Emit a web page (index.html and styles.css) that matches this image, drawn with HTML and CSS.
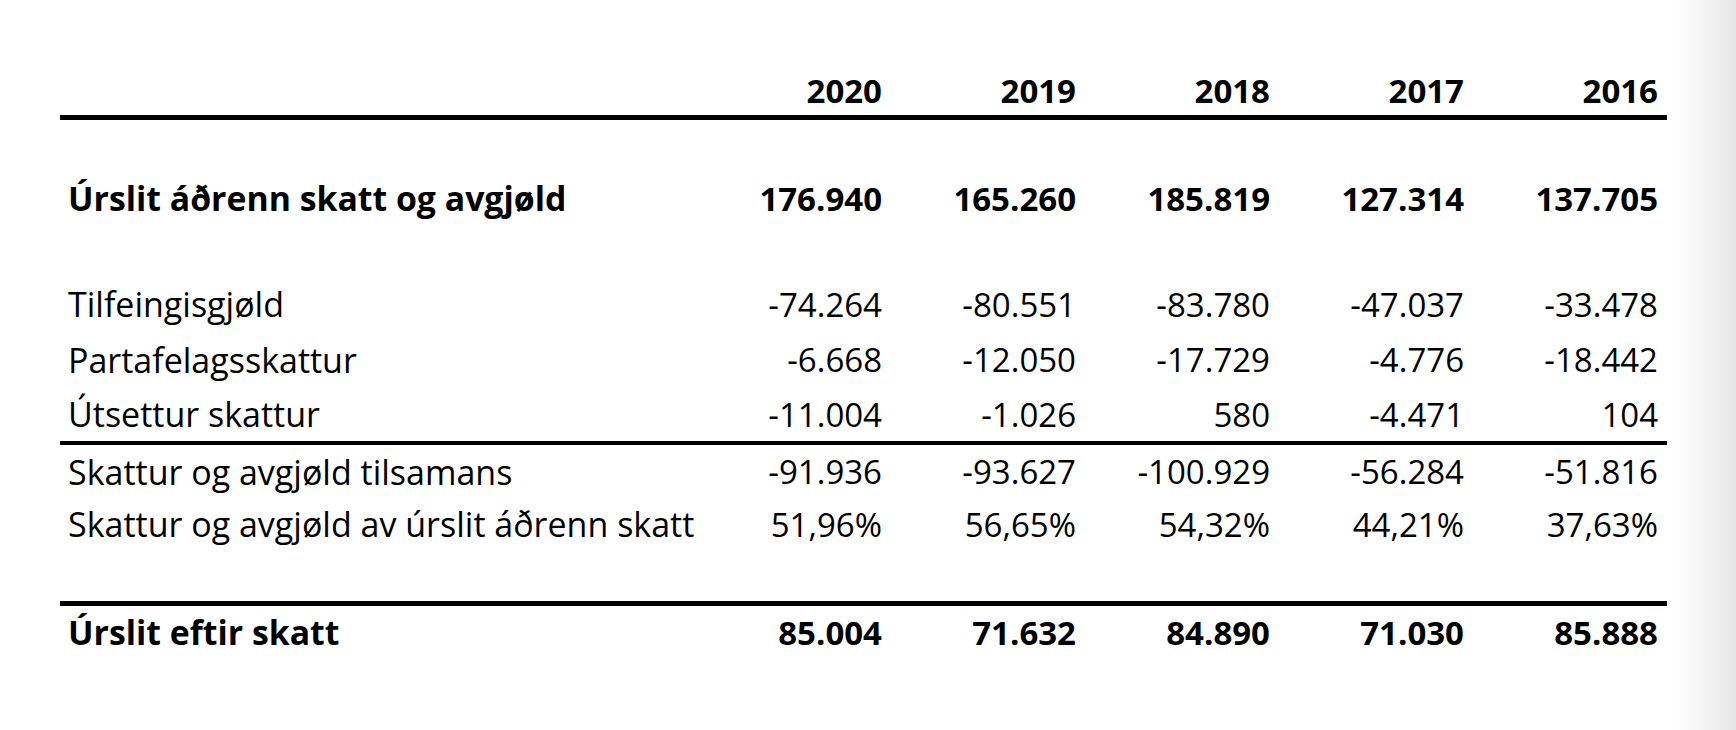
FILE: index.html
```html
<!DOCTYPE html>
<html lang="fo">
<head>
<meta charset="utf-8">
<title>Skattur og avgjøld</title>
<link rel="stylesheet" href="styles.css">
</head>
<body>
<div class="sheet">
  <div class="table">
    <div class="row head bold">
      <div class="label"></div>
      <div class="num">2020</div>
      <div class="num">2019</div>
      <div class="num">2018</div>
      <div class="num">2017</div>
      <div class="num">2016</div>
    </div>
    <div class="row blank"></div>
    <div class="row r56 bold">
      <div class="label">Úrslit áðrenn skatt og avgjøld</div>
      <div class="num">176.940</div>
      <div class="num">165.260</div>
      <div class="num">185.819</div>
      <div class="num">127.314</div>
      <div class="num">137.705</div>
    </div>
    <div class="row blank"></div>
    <div class="row r56">
      <div class="label">Tilfeingisgjøld</div>
      <div class="num">-74.264</div>
      <div class="num">-80.551</div>
      <div class="num">-83.780</div>
      <div class="num">-47.037</div>
      <div class="num">-33.478</div>
    </div>
    <div class="row r55">
      <div class="label">Partafelagsskattur</div>
      <div class="num">-6.668</div>
      <div class="num">-12.050</div>
      <div class="num">-17.729</div>
      <div class="num">-4.776</div>
      <div class="num">-18.442</div>
    </div>
    <div class="row r54 rule-thin">
      <div class="label">Útsettur skattur</div>
      <div class="num">-11.004</div>
      <div class="num">-1.026</div>
      <div class="num">580</div>
      <div class="num">-4.471</div>
      <div class="num">104</div>
    </div>
    <div class="row r53">
      <div class="label">Skattur og avgjøld tilsamans</div>
      <div class="num">-91.936</div>
      <div class="num">-93.627</div>
      <div class="num">-100.929</div>
      <div class="num">-56.284</div>
      <div class="num">-51.816</div>
    </div>
    <div class="row r52">
      <div class="label">Skattur og avgjøld av úrslit áðrenn skatt</div>
      <div class="num">51,96%</div>
      <div class="num">56,65%</div>
      <div class="num">54,32%</div>
      <div class="num">44,21%</div>
      <div class="num">37,63%</div>
    </div>
    <div class="row blank51 rule-thick"></div>
    <div class="row r52 bold">
      <div class="label">Úrslit eftir skatt</div>
      <div class="num">85.004</div>
      <div class="num">71.632</div>
      <div class="num">84.890</div>
      <div class="num">71.030</div>
      <div class="num">85.888</div>
    </div>
  </div>
</div>
</body>
</html>
```

FILE: styles.css
```css
html, body {
  margin: 0;
  padding: 0;
}

body {
  width: 1736px;
  height: 730px;
  overflow: hidden;
  background: linear-gradient(to right, #ffffff 0, #ffffff 1675px, #f5f5f5 1702px, #e6e6e6 1736px);
  font-family: "Open Sans", "Noto Sans", sans-serif;
  font-size: 33px;
  color: #000;
}

.sheet {
  padding: 66px 0 0 60px;
}

.table {
  width: 1607px;
}

.row {
  display: grid;
  grid-template-columns: 637px repeat(5, 194px);
  align-items: center;
  white-space: nowrap;
}

.label {
  padding-left: 8px;
  font-size: 34px;
}

.bold .label {
  font-size: 33.8px;
}

.num {
  text-align: right;
  padding-right: 9px;
}

.bold {
  font-weight: 700;
}

.head {
  height: 49px;
  border-bottom: 5px solid #000;
}

.blank { height: 50px; }
.blank51 { height: 51px; }
.r56 { height: 56px; }
.r55 { height: 55px; }
.r54 { height: 54px; }
.r53 { height: 53px; }
.r52 { height: 52px; }

.rule-thin {
  border-bottom: 4px solid #000;
}

.rule-thick {
  border-bottom: 5px solid #000;
}
```
